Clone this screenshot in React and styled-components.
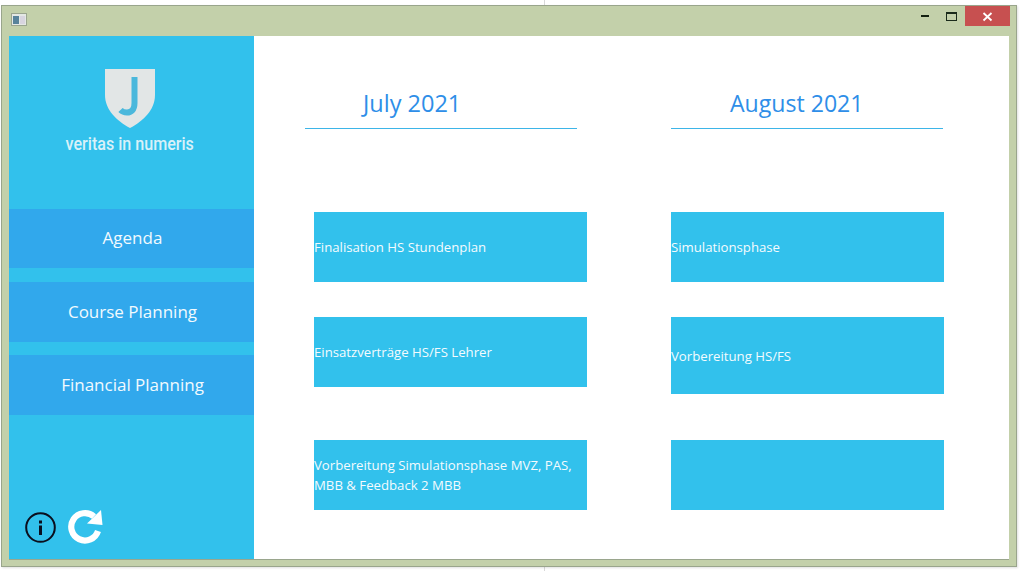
import React from "react";
import styled, { createGlobalStyle } from "styled-components";

const Global = createGlobalStyle`
  html, body { margin: 0; padding: 0; width: 1021px; height: 571px; overflow: hidden; }
  body {
    background-color: #ffffff;
    background-image: linear-gradient(#d9d9d9, #d9d9d9);
    background-size: 1px 100%;
    background-position: 544px 0;
    background-repeat: no-repeat;
    font-family: "Open Sans", "Noto Sans", sans-serif;
  }
`;

const Page = styled.div`
  padding: 5px 4px 4px 1px;
  width: 1021px;
  height: 571px;
  box-sizing: border-box;
`;

const Frame = styled.div`
  width: 1016px;
  height: 562px;
  box-sizing: border-box;
  background: #c3d0aa;
  border: 1px solid #99a58c;
  display: flex;
  flex-direction: column;
  padding: 0 7px 6px 7px;
  box-shadow: 1px 1px 2px rgba(0, 0, 0, 0.12);
`;

const TitleBar = styled.div`
  height: 30px;
  flex: none;
  display: flex;
  align-items: flex-start;
  justify-content: space-between;
`;

const AppIcon = styled.svg`
  width: 16px;
  height: 13px;
  margin: 7px 0 0 2px;
`;

const WindowControls = styled.div`
  display: flex;
  align-items: flex-start;
  margin-right: -1px;
`;

const ControlButton = styled.div`
  width: ${(p) => p.$w}px;
  height: 20px;
  display: flex;
  align-items: center;
  justify-content: center;
  background: ${(p) => p.$bg || "transparent"};
`;

const Body = styled.div`
  flex: 1;
  display: flex;
  min-height: 0;
  background: #ffffff;
  border-bottom: 1px solid #9aa68d;
`;

const Sidebar = styled.aside`
  width: 245px;
  flex: none;
  background: #32c1ec;
  display: flex;
  flex-direction: column;
`;

const Logo = styled.div`
  height: 173px;
  box-sizing: border-box;
  padding-top: 33px;
  display: flex;
  flex-direction: column;
  align-items: center;
  margin-left: -3px;
`;

const LogoText = styled.div`
  font-family: "Roboto", sans-serif;
  font-weight: 500;
  font-size: 18.5px;
  line-height: 20px;
  margin-top: 6px;
  color: #d9f1f9;
  transform: scaleX(0.87);
  white-space: nowrap;
`;

const Nav = styled.nav`
  display: flex;
  flex-direction: column;
`;

const NavItem = styled.div`
  height: ${(p) => p.$h}px;
  margin-bottom: ${(p) => p.$mb || 0}px;
  background: #31a8ec;
  color: #f2fafe;
  font-size: 17px;
  display: flex;
  align-items: center;
  justify-content: center;
  box-sizing: border-box;
  padding: 0 0 2px 2px;
`;

const SidebarFooter = styled.div`
  margin-top: auto;
  display: flex;
  align-items: center;
  gap: 11px;
  padding: 0 0 14px 16px;
`;

const Board = styled.main`
  flex: 1;
  display: grid;
  grid-template-columns: 366px 273px;
  padding: 0 0 0 51px;
  align-content: start;
`;

const MonthHeader = styled.div`
  width: 272px;
  height: 93px;
  box-sizing: border-box;
  padding: 51px 0 0 58px;
  border-bottom: 1px solid #3db5e8;
  color: #2e8ee8;
  font-size: ${(p) => (p.$second ? 23.1 : 23.5)}px;
  line-height: 32px;
  margin-bottom: 83px;
  ${(p) => p.$second && "padding-left: 59px;"}
`;

const Card = styled.div`
  height: ${(p) => p.$h}px;
  width: 273px;
  margin-left: ${(p) => p.$ml || 0}px;
  background: #32c1ec;
  color: #f4fbfe;
  font-size: 13.2px;
  line-height: 20px;
  display: flex;
  align-items: center;
  margin-bottom: ${(p) => p.$mb}px;
`;

function InfoIcon() {
  return (
    <svg width="31" height="31" viewBox="0 0 31 31">
      <circle cx="15.5" cy="15.5" r="14.3" fill="none" stroke="#0a0f1e" strokeWidth="2" />
      <rect x="14" y="13.5" width="3" height="9.5" fill="#0a0f1e" />
      <rect x="14" y="8.5" width="3" height="3" fill="#0a0f1e" />
    </svg>
  );
}

function RefreshIcon() {
  return (
    <svg width="36" height="36" viewBox="0 0 36 36">
      <path
        d="M31 22A13.7 13.7 0 1 1 27 7.5"
        fill="none"
        stroke="#ffffff"
        strokeWidth="6.2"
      />
      <path d="M34 1L35.5 16L20 14.5Z" fill="#ffffff" />
    </svg>
  );
}

export default function App() {
  return (
    <>
      <Global />
      <Page>
        <Frame>
          <TitleBar>
            <AppIcon viewBox="0 0 16 13">
              <rect x="0.5" y="0.5" width="15" height="12" fill="#e4e8e4" stroke="#9aa58f" />
              <rect x="2" y="3" width="6" height="8" fill="#58839b" />
              <rect x="9" y="3" width="5" height="8" fill="#d8d5e0" />
            </AppIcon>
            <WindowControls>
              <ControlButton $w={26}>
                <svg width="10" height="4" viewBox="0 0 10 4">
                  <rect x="1" y="1" width="8" height="2" fill="#12200f" />
                </svg>
              </ControlButton>
              <ControlButton $w={27}>
                <svg width="11" height="9" viewBox="0 0 11 9">
                  <rect x="0.5" y="0.5" width="10" height="8" fill="none" stroke="#1a2a1a" />
                  <rect x="0" y="0" width="11" height="2" fill="#1a2a1a" />
                </svg>
              </ControlButton>
              <ControlButton $w={45} $bg="#c75050">
                <svg width="11" height="11" viewBox="0 0 11 11">
                  <path d="M1.5 2L9.5 9.5M9.5 2L1.5 9.5" stroke="#ffffff" strokeWidth="1.8" />
                </svg>
              </ControlButton>
            </WindowControls>
          </TitleBar>
          <Body>
            <Sidebar>
              <Logo>
                <svg width="50" height="59" viewBox="0 0 50 59">
                  <path d="M0 0H50V26C50 41 38 52 25 59C12 52 0 41 0 26Z" fill="#e2e6e6" />
                  <path
                    d="M29.5 8V34C29.5 41 26 43.5 22 43.5C19 43.5 17 42.5 15.5 41"
                    fill="none"
                    stroke="#4ab8dc"
                    strokeWidth="6"
                  />
                </svg>
                <LogoText>veritas in numeris</LogoText>
              </Logo>
              <Nav>
                <NavItem $h={59} $mb={14}>Agenda</NavItem>
                <NavItem $h={60} $mb={13}>Course Planning</NavItem>
                <NavItem $h={60}>Financial Planning</NavItem>
              </Nav>
              <SidebarFooter>
                <InfoIcon />
                <RefreshIcon />
              </SidebarFooter>
            </Sidebar>
            <Board>
              <MonthHeader>July 2021</MonthHeader>
              <MonthHeader $second>August 2021</MonthHeader>

              <Card $ml={9} $mb={35} $h={70}>Finalisation HS Stundenplan</Card>
              <Card $mb={35} $h={70}>Simulationsphase</Card>

              <Card $ml={9} $mb={53} $h={70}>Einsatzverträge HS/FS Lehrer</Card>
              <Card $mb={46} $h={77}>Vorbereitung HS/FS</Card>

              <Card $ml={9} $mb={0} $h={70}>
                <span>Vorbereitung Simulationsphase MVZ, PAS,<br />MBB &amp; Feedback 2 MBB</span>
              </Card>
              <Card $mb={0} $h={70} />
            </Board>
          </Body>
        </Frame>
      </Page>
    </>
  );
}
